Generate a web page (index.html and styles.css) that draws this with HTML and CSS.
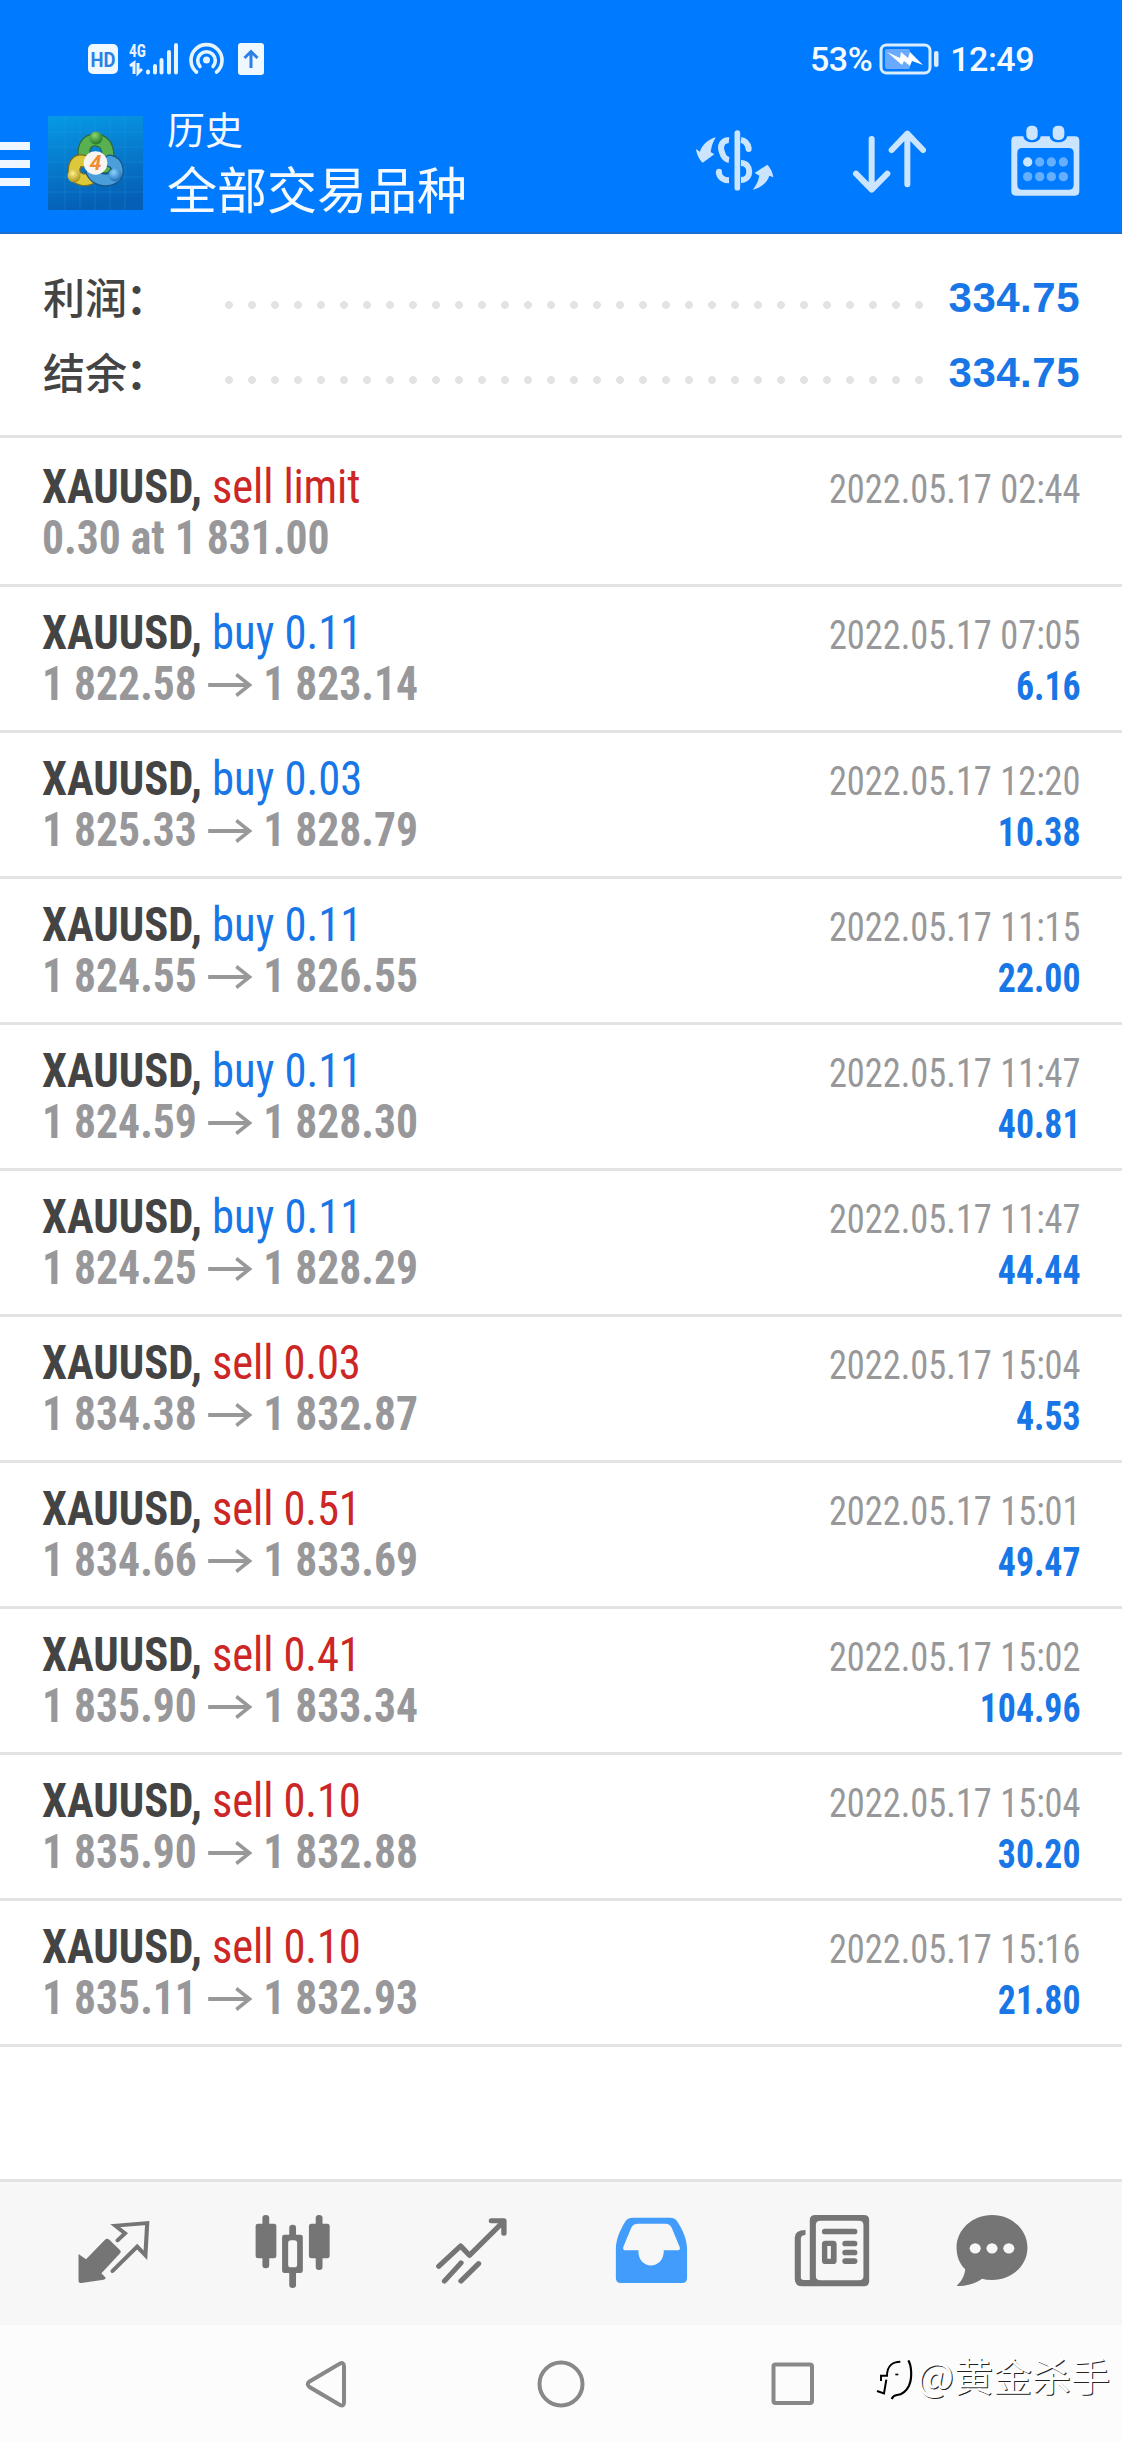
FILE: index.html
```html
<!DOCTYPE html>
<html lang="zh-CN">
<head>
<meta charset="utf-8">
<title>历史</title>
<link rel="stylesheet" href="styles.css">
</head>
<body>
<div class="screen">
  <header class="header">
    <div class="status">
      <svg class="status-icons" width="180" height="40" viewBox="0 0 180 40">
        <rect x="0" y="4" width="30" height="30" rx="5" fill="#f0f8ff"/>
        <text x="15" y="26.500" class="hd" text-anchor="middle" textLength="25" lengthAdjust="spacingAndGlyphs">HD</text>
        <text x="41" y="17" class="net" textLength="17" lengthAdjust="spacingAndGlyphs">4G</text>
        <path d="M42 26l4-3v11M50 23v10l4-4" fill="none" stroke="#e6f4ff" stroke-width="3"/>
        <path d="M60 31.500v1M67 26v6.500M73.500 20v12.500M81 12v20.500M88 5v27.500" stroke="#e6f4ff" stroke-width="4" stroke-linecap="round"/>
        <g fill="none" stroke="#e6f4ff" stroke-width="3.600" stroke-linecap="round"><path d="M108.500 32A15.500 15.500 0 1 1 128.500 32"/><path d="M112 26.500A8.800 8.800 0 1 1 125 26.500"/></g>
        <circle cx="118.500" cy="20" r="3.500" fill="#e6f4ff"/>
        <rect x="150" y="3" width="26" height="32" rx="3" fill="#f0f8ff"/>
        <path d="M163 28V12M156.500 18l6.500-6.500 6.500 6.500" fill="none" stroke="#2b7fe6" stroke-width="3"/>
      </svg>
      <div class="status-right">
        <span class="pct">53%</span>
        <svg width="62" height="34" viewBox="0 0 62 34">
          <rect x="2" y="3" width="49" height="28" rx="5.500" fill="none" stroke="#d9edff" stroke-width="3"/>
          <rect x="6" y="7" width="25" height="20" rx="2" fill="#69aaff"/>
          <path d="M8 10l13 6 1-6 7 6 2-6 13 13-11-4-2 5-6-5-2 4z" fill="#fff"/>
          <rect x="55" y="9" width="4.500" height="16" rx="2" fill="#d9edff"/>
        </svg>
        <span class="clock">12:49</span>
      </div>
    </div>
    <div class="titlebar">
      <div class="menu"><i></i><i></i><i></i></div>
      <svg class="logo" width="95" height="94" viewBox="0 0 95 94">
        <defs>
          <linearGradient id="bg" x1="0" y1="0" x2="0.200" y2="1"><stop offset="0" stop-color="#069ae6"/><stop offset="0.550" stop-color="#0679cb"/><stop offset="1" stop-color="#0560b5"/></linearGradient>
          <radialGradient id="gr" cx="0.400" cy="0.300" r="0.700"><stop offset="0" stop-color="#8fd36a"/><stop offset="1" stop-color="#1c7a2c"/></radialGradient>
          <radialGradient id="ye" cx="0.400" cy="0.300" r="0.700"><stop offset="0" stop-color="#fff08a"/><stop offset="1" stop-color="#ab9217"/></radialGradient>
          <radialGradient id="bl" cx="0.400" cy="0.300" r="0.700"><stop offset="0" stop-color="#8ed2ff"/><stop offset="1" stop-color="#1c70b8"/></radialGradient>
        </defs>
        <rect width="95" height="94" fill="url(#bg)"/>
        <path d="M17 0v94M32 0v94M47 0v94M62 0v94M77 0v94M0 16h95M0 31h95M0 46h95M0 61h95M0 76h95" stroke="#35a5e8" stroke-opacity="0.250"/>
        <g fill="none" stroke-linecap="round">
          <path d="M36 40C35 29 40 24 47 24C55 24 60 29 60 40C60 44 59 48 57 51" stroke="#2c6b35" stroke-width="13"/>
          <path d="M36 40C35 29 40 24 47 24C55 24 60 29 60 40C60 44 59 48 57 51" stroke="#58b050" stroke-width="10.500"/>
          <path d="M35 45C28 44 26 49 26 56C28 64 38 66 45 61" stroke="#776d25" stroke-width="13"/>
          <path d="M35 45C28 44 26 49 26 56C28 64 38 66 45 61" stroke="#dcc83a" stroke-width="10.500"/>
          <path d="M62 45C70 47 71 56 67 61C58 67 47 63 44 56" stroke="#17548b" stroke-width="13"/>
          <path d="M62 45C70 47 71 56 67 61C58 67 47 63 44 56" stroke="#4a9fda" stroke-width="10.500"/>
        </g>
        <circle cx="48" cy="22" r="6.500" fill="url(#gr)"/><circle cx="26" cy="60" r="6.500" fill="url(#ye)"/><circle cx="67" cy="59" r="6.500" fill="url(#bl)"/>
        <circle cx="47.500" cy="47" r="11.800" fill="#f8f5f0"/>
        <text x="47.500" y="54" text-anchor="middle" class="four">4</text>
      </svg>
      <div class="titles"><div class="sub">历史</div><div class="main">全部交易品种</div></div>
      <div class="actions">
        <svg width="80" height="64" viewBox="102 328 240 192">
          <path d="M108 388L120 396C126 376 146 358 168 353C156 370 154 386 152 397L163 404L128 429C118 420 110 404 108 388Z" fill="#cce5ff"/>
          <path d="M340 473L328 468C322 488 304 504 278 510C292 494 296 478 298 468L284 460L322 435C332 446 338 458 340 473Z" fill="#cce5ff"/>
          <path d="M232 340V504" stroke="#cce5ff" stroke-width="17" stroke-linecap="round"/>
          <path d="M207 362C188 360 178 378 186 398C190 412 200 420 207 421M176 456C177 474 192 482 207 482M243 361C256 363 263 370 266 386M243 430C276 430 276 481 243 481" fill="none" stroke="#cce5ff" stroke-width="18"/>
          <circle cx="266" cy="388" r="9" fill="#cce5ff"/><circle cx="177" cy="456" r="9" fill="#cce5ff"/>
        </svg>
        <svg width="80" height="70" viewBox="570 322 240 210">
          <path d="M635 358V508M588 462L635 510L682 462M742 494V344M695 391L742 342L789 391" fill="none" stroke="#cce5ff" stroke-width="18" stroke-linecap="round" stroke-linejoin="round"/>
        </svg>
        <svg width="76" height="76" viewBox="1040 310 228 228">
          <path fill-rule="evenodd" fill="#cce5ff" d="M1066 350H1089C1091 374 1139 374 1141 350H1168C1170 374 1218 374 1220 350H1244Q1257 350 1257 363V515Q1257 528 1244 528H1066Q1053 528 1053 515V363Q1053 350 1066 350ZM1086 385Q1071 385 1071 400V495Q1071 510 1086 510H1225Q1240 510 1240 495V400Q1240 385 1225 385Z"/>
          <rect x="1098" y="318" width="34" height="43" rx="15" fill="#cce5ff"/><rect x="1177" y="318" width="35" height="43" rx="15" fill="#cce5ff"/>
          <circle cx="1102" cy="427" r="14" fill="#cce5ff"/>
          <g fill="#66affe"><circle cx="1138" cy="427" r="14"/><circle cx="1173" cy="427" r="14"/><circle cx="1209" cy="427" r="14"/><circle cx="1102" cy="471" r="14"/><circle cx="1138" cy="471" r="14"/><circle cx="1173" cy="471" r="14"/><circle cx="1209" cy="471" r="14"/></g>
        </svg>
      </div>
    </div>
  </header>

  <section class="summary">
    <div class="sum-row"><span class="label">利润<b>：</b></span><span class="dots"></span><span class="total">334.75</span></div>
    <div class="sum-row"><span class="label">结余<b>：</b></span><span class="dots"></span><span class="total">334.75</span></div>
  </section>

  <main class="history" id="history"></main>

  <nav class="tabs">
    <svg class="tab" viewBox="205.400 129 223.600 240" preserveAspectRatio="none">
      <path d="M218 252L239 268L292 209Q298 203 304 209L333 239Q339 245 333 251L282 310L294 323Q294 328 288 329L226 339Q218 339 218 332Z" fill="#757575"/>
      <path d="M327 211L348 190L321 167L410 159L405 256L382 230L313 303" fill="none" stroke="#757575" stroke-width="11.500" stroke-linecap="round"/>
    </svg>
    <svg class="tab" viewBox="705.700 129 223.600 240" preserveAspectRatio="none">
      <g fill="#757575"><rect x="713" y="161" width="58" height="104" rx="7"/><rect x="732" y="135" width="19" height="160" rx="9"/><rect x="862" y="161" width="58" height="104" rx="7"/><rect x="881" y="135" width="19" height="165" rx="9"/><rect x="807" y="164" width="19" height="40" rx="9"/><rect x="807" y="295" width="19" height="59" rx="9"/>
      <path fill-rule="evenodd" d="M794 194H838Q845 194 845 201V302Q845 309 838 309H794Q787 309 787 302V201Q787 194 794 194ZM812 211Q804 211 804 219V284Q804 292 812 292H821Q829 292 829 284V219Q829 211 821 211Z"/></g>
    </svg>
    <svg class="tab" viewBox="1206 129 223.600 240" preserveAspectRatio="none">
      <path d="M1225 289L1286 228L1311 256L1404 157M1372 152H1407V190M1241 333L1287 279M1287 333L1336 281" fill="none" stroke="#757575" stroke-width="15" stroke-linecap="round" stroke-linejoin="round"/>
    </svg>
    <svg class="tab" viewBox="138.400 129 223.600 240" preserveAspectRatio="none">
      <path fill="#419cfc" fill-rule="evenodd" d="M200 143H303Q318 143 324 155C340 182 351 208 351 238V324Q351 339 337 339H166Q152 339 152 324V238C152 208 163 182 178 155Q184 143 200 143ZM214 161Q200 161 195 173L173 230Q170 241 180 241H215C213 302 287 302 286 241H323Q334 241 330 230L308 173Q303 161 290 161Z"/>
    </svg>
    <svg class="tab" viewBox="638.700 129 223.600 240" preserveAspectRatio="none">
      <g fill="#757575"><path fill-rule="evenodd" d="M710 135H845Q860 135 860 150V334Q860 349 845 349H675Q652 349 652 326V203Q652 180 682 180V195Q669 195 669 207V322Q669 330 677 330H694V150Q694 135 710 135ZM724 152Q711 152 711 165V318Q711 331 724 331H831Q844 331 844 318V165Q844 152 831 152Z"/>
      <rect x="728" y="176" width="99" height="17" rx="8"/><rect x="785" y="212" width="42" height="17" rx="8"/><rect x="785" y="239" width="42" height="17" rx="8"/><rect x="785" y="265" width="42" height="17" rx="8"/>
      <path fill-rule="evenodd" d="M738 212H759Q769 212 769 222V272Q769 282 759 282H738Q728 282 728 272V222Q728 212 738 212ZM743 228V266H753V228Z"/></g>
    </svg>
    <svg class="tab" viewBox="1094.200 129 223.600 240" preserveAspectRatio="none">
      <path fill="#757575" d="M1131 298C1116 282 1107 260 1107 233C1107 179 1151 135 1206 135C1261 135 1305 179 1305 233C1305 287 1261 330 1206 330Q1190 330 1178 326C1160 341 1135 348 1107 348C1119 336 1130 318 1131 298Z"/>
      <g fill="#f7f7f7"><circle cx="1159" cy="235" r="15.500"/><circle cx="1206" cy="235" r="15.500"/><circle cx="1253" cy="235" r="15.500"/></g>
    </svg>
  </nav>

  <footer class="navbar">
    <svg width="42" height="50" viewBox="0 0 42 50"><path d="M4.500 22.500L35 4.500Q39 3 39 7.500V43Q39 48 35 46L4.500 28Q1 25 4.500 22.500Z" fill="none" stroke="#888" stroke-width="4"/></svg>
    <svg width="48" height="50" viewBox="0 0 48 50"><ellipse cx="24" cy="25" rx="21.500" ry="21.500" fill="none" stroke="#888" stroke-width="4"/></svg>
    <svg width="44" height="50" viewBox="0 0 44 50"><rect x="2.500" y="5.500" width="38.500" height="38.500" rx="2" fill="none" stroke="#888" stroke-width="4"/></svg>
    <div class="watermark">
      <svg width="42" height="50" viewBox="0 0 126 150">
        <path d="M18 96V80H36C36 50 54 38 76 38M34 92L27 133L6 126" fill="none" stroke="#000" stroke-width="6"/>
        <path d="M100 34C110 50 112 88 102 110C96 122 84 136 66 138Q54 140 50 150" fill="none" stroke="#000" stroke-width="6.500"/>
        <path d="M61 74h9v5h-9z"/>
      </svg>
      <span>@黄金杀手</span>
    </div>
  </footer>
</div>
<script src="history.js"></script>
</body>
</html>
```
FILE: history.js
```js
const deals = [
  ['sell', 'limit', null, null, '2022.05.17 02:44', ''],
  ['buy', '0.11', '1 822.58', '1 823.14', '2022.05.17 07:05', '6.16'],
  ['buy', '0.03', '1 825.33', '1 828.79', '2022.05.17 12:20', '10.38'],
  ['buy', '0.11', '1 824.55', '1 826.55', '2022.05.17 11:15', '22.00'],
  ['buy', '0.11', '1 824.59', '1 828.30', '2022.05.17 11:47', '40.81'],
  ['buy', '0.11', '1 824.25', '1 828.29', '2022.05.17 11:47', '44.44'],
  ['sell', '0.03', '1 834.38', '1 832.87', '2022.05.17 15:04', '4.53'],
  ['sell', '0.51', '1 834.66', '1 833.69', '2022.05.17 15:01', '49.47'],
  ['sell', '0.41', '1 835.90', '1 833.34', '2022.05.17 15:02', '104.96'],
  ['sell', '0.10', '1 835.90', '1 832.88', '2022.05.17 15:04', '30.20'],
  ['sell', '0.10', '1 835.11', '1 832.93', '2022.05.17 15:16', '21.80'],
];
const arrow = '<svg class="arrow" width="48" height="24" viewBox="0 0 48 24"><path d="M0 12H45M31 1.500L45.500 12L31 22.500" fill="none" stroke="#98989b" stroke-width="3.800"/></svg>';
document.getElementById('history').innerHTML = deals.map(([side, size, from, to, time, profit]) => `
  <article class="deal">
    <div class="left">
      <div class="line order"><b>XAUUSD,</b> <span class="${side}">${side} ${size}</span></div>
      <div class="line price">${from ? `<span>${from}</span>${arrow}<span>${to}</span>` : '<span>0.30 at 1 831.00</span>'}</div>
    </div>
    <div class="right">
      <div class="line time">${time}</div>
      <div class="line profit">${profit}</div>
    </div>
  </article>`).join('');
```
FILE: styles.css
```css
* { box-sizing: border-box; }
body { margin: 0; background: #fff; font-family: Roboto, "Noto Sans CJK SC", sans-serif; }
.screen { display: flex; flex-direction: column; width: 1122px; height: 2442px; overflow: hidden; }
svg { display: block; flex: none; overflow: visible; }

.header { height: 234px; background: #007aff; border-bottom: 2px solid #1a6fd0; color: #f4faff; }
.status { display: flex; justify-content: space-between; height: 100px; padding: 40px 88px 0 88px; }
.status-right { display: flex; height: 38px; align-items: center; font-weight: 500; font-size: 34px; letter-spacing: -0.5px; }
.status-right svg { margin: 0 9px 0 7px; }
.hd { font: 700 21px Roboto; fill: #2b7fe6; }
.net { font: 700 19px "Roboto Condensed", Roboto; fill: #e6f4ff; }
.four { font: italic 700 21px Roboto; fill: #f08a35; }
.titlebar { display: flex; }
.menu { display: flex; flex-direction: column; gap: 10px; width: 30px; padding-top: 42px; }
.menu i { height: 8px; background: #eef7ff; }
.logo { margin: 16px 0 0 18px; }
.titles { margin-left: 24px; font-family: "Noto Sans CJK SC", sans-serif; }
.sub { font-size: 38px; line-height: 50px; margin-top: 3px; }
.main { font-size: 50px; line-height: 70px; margin-top: -1px; }
.actions { display: flex; margin-left: auto; padding-right: 39px; }
.actions svg:nth-child(1) { margin-top: 29px; }
.actions svg:nth-child(2) { margin: 27px 77px 0 76px; }
.actions svg:nth-child(3) { margin-top: 23px; }

.summary { height: 204px; padding: 27px 42px 0 43px; border-bottom: 3px solid #e3e3e4; }
.sum-row { display: flex; height: 75px; }
.label { width: 182px; font: 500 42px/69px "Noto Sans CJK SC", sans-serif; color: #444; }
.label b { margin-left: -1px; }
.dots { width: 713px; height: 8px; margin-top: 40px; background: radial-gradient(circle at 4px 4px, #e3e3e5 3.600px, transparent 4.200px) 0 0 / 23px 8px; }
.total { margin-left: auto; font: 700 42px/73px "Liberation Sans", Arial, sans-serif; letter-spacing: 0.500px; color: #1876e6; }

.history { flex: 1; font-family: "Roboto Condensed", Roboto, sans-serif; font-size: 48px; }
.deal { display: flex; justify-content: space-between; height: 146px; padding: 20px 41px 0 42px; border-bottom: 3px solid #e3e3e4; }
.deal:first-child { height: 149px; padding-top: 23px; }
.line { height: 51px; line-height: 51px; white-space: nowrap; color: #98989b; }
.order { transform: scaleX(0.930); transform-origin: left; }
.price { transform: scaleX(0.908); transform-origin: left; }
.time { transform: scaleX(0.910); transform-origin: right; }
.profit { transform: scaleX(0.895); transform-origin: right; }
.right { text-align: right; }
.line b { color: #444; }
.line .buy { color: #1876e6; }
.line .sell { color: #cd2626; letter-spacing: -0.15px; }
.line.price { display: flex; align-items: center; font-weight: 700; }
.arrow { margin: 2px 13px 0 12px; }
.time, .profit { font-size: 40px; padding-top: 3px; }
.line.profit { font-weight: 700; color: #1876e6; }

.tabs { display: flex; height: 146px; padding: 31px 0 0 74px; gap: 99px; background: #f7f7f7; border-top: 3px solid #e3e3e4; }
.tab { width: 80px; height: 80px; }
.tab:last-child { margin-left: -17px; }

.navbar { position: relative; display: flex; height: 117px; padding: 34px 0 0 305px; background: #fcfcfc; }
.navbar > svg:nth-child(2) { margin-left: 190px; }
.navbar > svg:nth-child(3) { margin-left: 186px; }
.watermark { position: absolute; left: 875px; top: 13px; display: flex; align-items: center; font: 39px/72px "Noto Sans CJK SC", sans-serif; color: #fff; text-shadow: 1px 1px 0 #222; }
```
